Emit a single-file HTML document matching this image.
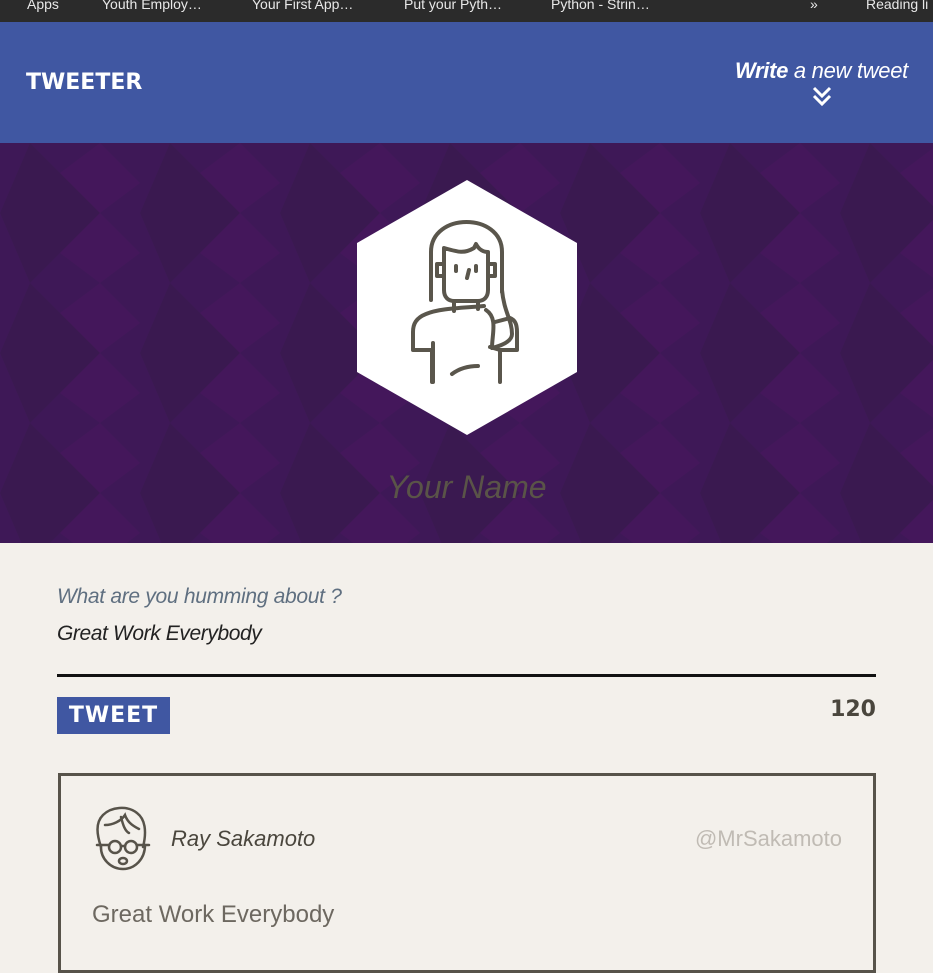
<!DOCTYPE html>
<html><head><meta charset="utf-8"><style>
*{margin:0;padding:0;box-sizing:border-box}
body{width:933px;height:933px;overflow:hidden;background:#f3f0eb;font-family:"Liberation Sans",sans-serif;position:relative}
.bm{position:absolute;top:0;left:0;width:933px;height:22px;background:#2b2b2b;color:#e8e8e8;font-size:14px;line-height:12px;white-space:nowrap}
.bm span{position:absolute;top:-2px}
.hdr{position:absolute;top:22px;left:0;width:933px;height:121px;background:#4057a2}
.logo{position:absolute;left:26px;top:48px;color:#fff;font-weight:900;font-size:22px;letter-spacing:0px;font-family:"DejaVu Sans",sans-serif}
.write{position:absolute;right:25px;top:36px;color:#fff;font-style:italic;font-size:22px;font-weight:300;letter-spacing:-0.3px}
.hero{position:absolute;top:143px;left:0;width:933px;height:400px;background:#3e1857;overflow:hidden}
.name{position:absolute;top:326px;width:933px;text-align:center;color:#5a5448;font-style:italic;font-size:32px}
.q{position:absolute;left:57px;top:585px;font-size:21px;font-style:italic;color:#5f6f80;letter-spacing:-0.3px}
.g{position:absolute;left:57px;top:622px;font-size:21px;font-style:italic;color:#222;letter-spacing:-0.4px}
.line{position:absolute;left:57px;top:674px;width:819px;height:3px;background:#111}
.btn{position:absolute;left:57px;top:697px;width:113px;height:37px;background:#4057a2;color:#fff;font-family:"DejaVu Sans",sans-serif;font-weight:900;font-size:22px;text-align:center;line-height:37px;letter-spacing:1px}
.cnt{position:absolute;right:57px;top:697px;color:#4a463d;font-family:"DejaVu Sans",sans-serif;font-weight:900;font-size:22px}
.card{position:absolute;left:58px;top:773px;width:818px;height:200px;border:3px solid #57534a}
.rn{position:absolute;left:171px;top:826px;font-style:italic;font-size:22px;color:#4a463d}
.h{position:absolute;right:91px;top:826px;font-size:22px;color:#c0bbb4}
.tw{position:absolute;left:92px;top:901px;font-size:24px;color:#6d6860}
</style></head><body>
<div class="bm"><span style="left:27px">Apps</span><span style="left:102px">Youth Employ…</span><span style="left:252px">Your First App…</span><span style="left:404px">Put your Pyth…</span><span style="left:551px">Python - Strin…</span><span style="left:810px">»</span><span style="left:866px">Reading li</span></div>
<div class="hdr"><div class="logo">TWEETER</div><div class="write"><b style="font-weight:700">Write</b> a new tweet</div>
<svg style="position:absolute;left:811px;top:64px" width="22" height="22" viewBox="0 0 22 22" fill="none" stroke="#fff" stroke-width="3"><path d="M3 2l8 8 8-8M3 10l8 8 8-8"/></svg></div>
<div class="hero">
<svg width="933" height="400" style="position:absolute;top:0;left:0"><defs><pattern id="p" width="140" height="140" patternUnits="userSpaceOnUse"><path d="M30 0L100 70 30 140 0 70Z" fill="#361a4a" opacity=".5"/><path d="M100 0L140 40 100 70 60 30Z" fill="#47155e" opacity=".6"/><path d="M100 70L140 110 100 140 60 110Z" fill="#47155e" opacity=".6"/></pattern></defs><rect width="933" height="400" fill="url(#p)"/>
<polygon points="467,37 577,100 577,229 467,292 357,229 357,100" fill="#fff"/>
<g transform="translate(0,-143)" fill="none" stroke="#5a564c" stroke-width="4" stroke-linecap="round" stroke-linejoin="round">
<path d="M431 300v-48c0-40 71-40 71 0v40"/>
<path d="M444 248c14 4 20 6 30 0l2-4c3 6 8 8 12 8v38c0 7-4 11-10 11h-24c-6 0-10-4-10-11z"/>
<path d="M444 264h-7v12h7M488 264h7v12h-7"/>
<path d="M456 266v5M476 266v5M469 270l-2 8"/>
<path d="M454 301v10M478 301v8"/>
<path d="M502 290c2 22 10 30 10 44 0 8-12 12-20 14 0-14 6-30-6-38"/>
<path d="M484 306c-20 2-44 2-58 8-10 4-13 10-13 18v18h19v32M413 350h19"/>
<path d="M495 322l15-4c5 2 7 6 7 14v18h-17v32M500 350l-10-3"/>
<path d="M433 343v39M452 374c8-6 18-8 26-8"/>
</g></svg>
<div class="name">Your Name</div></div>
<div class="q">What are you humming about ?</div>
<div class="g">Great Work Everybody</div>
<div class="line"></div>
<div class="btn">TWEET</div>
<div class="cnt">120</div>
<div class="card"></div>
<svg style="position:absolute;left:93px;top:805px" width="60" height="68" viewBox="0 0 60 68" fill="none" stroke="#57534a" stroke-width="2.5" stroke-linecap="round"><path d="M8 42c-4-12-6-24 2-32 8-8 24-10 34-2 8 6 10 18 6 34"/><path d="M8 40c-1 14 10 24 22 24s22-10 22-24"/><path d="M12 20c8 0 16-4 20-10 2 6 6 10 14 14M28 12c2 8 4 14 8 16"/><circle cx="22" cy="42" r="6"/><circle cx="38" cy="42" r="6"/><path d="M28 41h4M4 40h12M44 40h12"/><ellipse cx="30" cy="56" rx="4" ry="3"/></svg>
<div class="rn">Ray Sakamoto</div>
<div class="h">@MrSakamoto</div>
<div class="tw">Great Work Everybody</div>
</body></html>
